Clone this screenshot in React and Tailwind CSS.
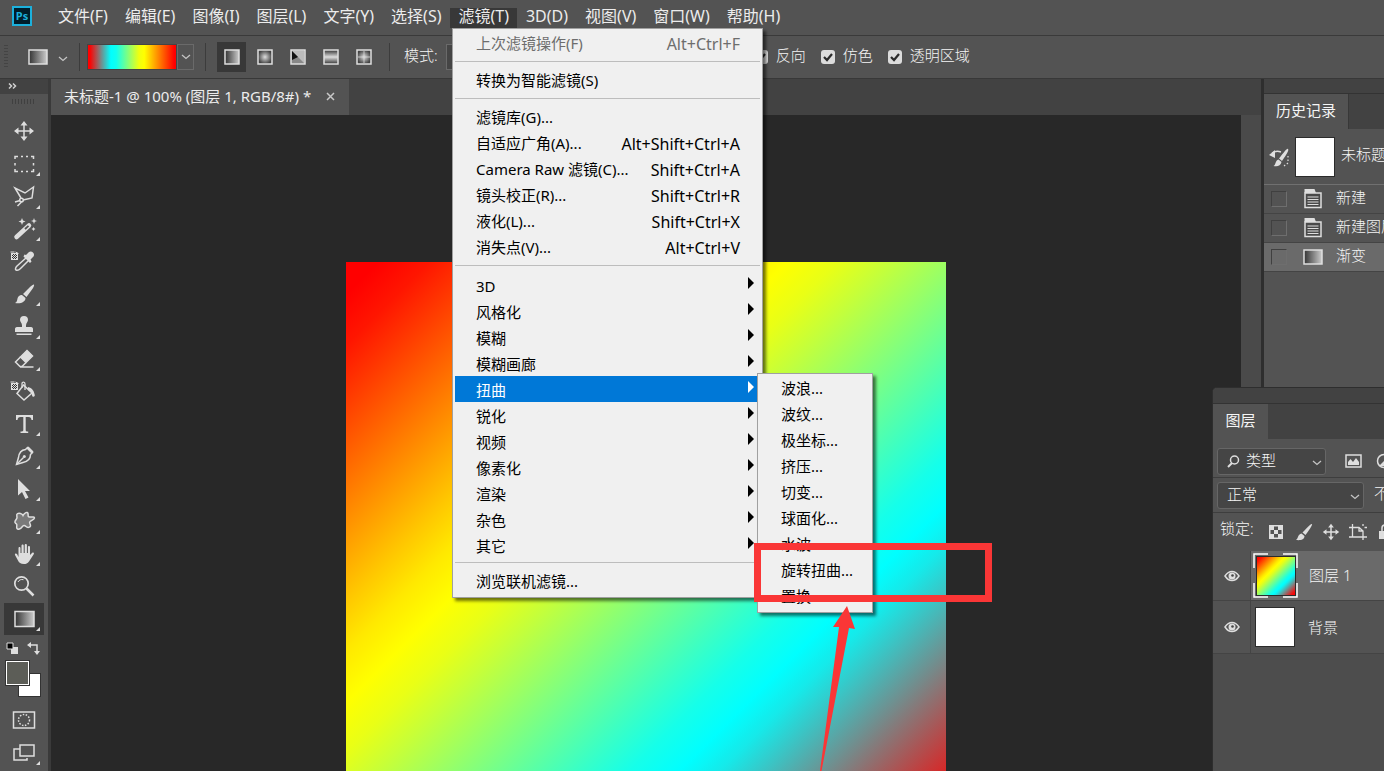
import React from "react";

const RAINBOW =
  "bg-[linear-gradient(135deg,#f00_2.7%,#ff1600_7%,#ff3800_11.2%,#ffc700_28.2%,#ffe900_32.5%,#ff0_36.7%,#e9ff16_40.9%,#c7ff38_45.1%,#38ffc7_61.8%,#16ffe9_66%,#0ff_70.2%,#16e9e9_73.6%,#38c7c7_77%,#c73838_90.8%,#e91616_94.2%,#f00_98%)]";

const MENUS = ["文件(F)", "编辑(E)", "图像(I)", "图层(L)", "文字(Y)", "选择(S)", "滤镜(T)", "3D(D)", "视图(V)", "窗口(W)", "帮助(H)"];

const FILTER_GROUPS = [
  [{ label: "上次滤镜操作(F)", keys: "Alt+Ctrl+F", disabled: true }],
  [{ label: "转换为智能滤镜(S)" }],
  [
    { label: "滤镜库(G)..." },
    { label: "自适应广角(A)...", keys: "Alt+Shift+Ctrl+A" },
    { label: "Camera Raw 滤镜(C)...", keys: "Shift+Ctrl+A" },
    { label: "镜头校正(R)...", keys: "Shift+Ctrl+R" },
    { label: "液化(L)...", keys: "Shift+Ctrl+X" },
    { label: "消失点(V)...", keys: "Alt+Ctrl+V" },
  ],
  [
    { label: "3D", sub: true },
    { label: "风格化", sub: true },
    { label: "模糊", sub: true },
    { label: "模糊画廊", sub: true },
    { label: "扭曲", sub: true, active: true },
    { label: "锐化", sub: true },
    { label: "视频", sub: true },
    { label: "像素化", sub: true },
    { label: "渲染", sub: true },
    { label: "杂色", sub: true },
    { label: "其它", sub: true },
  ],
  [{ label: "浏览联机滤镜..." }],
];

const DISTORT = ["波浪...", "波纹...", "极坐标...", "挤压...", "切变...", "球面化...", "水波...", "旋转扭曲...", "置换..."];

function Svg({ w = 24, h = 24, children, className = "" }) {
  return (
    <svg
      width={w}
      height={h}
      viewBox={`0 0 ${w} ${h}`}
      fill="none"
      stroke="#dedede"
      strokeWidth="1.5"
      className={`shrink-0 ${className}`}
      aria-hidden="true"
    >
      {children}
    </svg>
  );
}

function Chevron({ className = "" }) {
  return (
    <Svg w={10} h={6} className={className}>
      <path d="M1 1l4 3.5L9 1" stroke="#c4c4c4" strokeWidth="1.3" />
    </Svg>
  );
}

function MoveArt() {
  return (
    <>
      <path d="M12 4v16M4 12h16" />
      <path d="M12 2l3.500 4.500h-7zM12 22l3.500-4.500h-7zM2 12l4.500-3.500v7zM22 12l-4.500-3.500v7z" fill="#dedede" stroke="none" />
    </>
  );
}

function Checker() {
  return (
    <g>
      <path d="M-1 4h7v7h-7z" fill="#dedede" stroke="none" />
      <path d="M1 5h1v1H1zM3 5h1v1H3zM2 6h1v1H2zM4 6h1v1H4zM0 6h1v1H0zM1 7h1v1H1zM3 7h1v1H3zM2 8h1v1H2zM4 8h1v1H4zM0 8h1v1H0zM1 9h1v1H1zM3 9h1v1H3z" fill="#333" stroke="none" />
      <path d="M-1.500 3h4M3.500 3l3 1.500" strokeWidth="1" />
    </g>
  );
}

const TOOLS = [
  { name: "移动工具", art: <MoveArt /> },
  {
    name: "矩形选框工具", more: true,
    art: <path d="M3 7V4.500h3M9 4.500h2M14 4.500h2M19 4.500h2.500V7M21.500 11v2.500M21.500 17v2.500H19M16 19.500h-2M11 19.500H9M6 19.500H3V17M3 13.500V11" />,
  },
  {
    name: "套索工具", more: true,
    art: (
      <>
        <path d="M9 14L3 4l10 5 8.500-6L20 14l-9 2" />
        <circle cx="9.500" cy="16" r="1.800" />
        <path d="M8 16.500l-5 1.500M9.500 18l-4 4" />
      </>
    ),
  },
  {
    name: "快速选择工具", more: true,
    art: (
      <>
        <path d="M4.500 20L17 8.500" strokeWidth="4.500" strokeLinecap="round" />
        <path d="M13 12l3.500-3.200" stroke="#535353" strokeWidth="1.800" />
        <path d="M10 1l1 2.500L13.500 4.500 11 5.500 10 8 9 5.500 6.500 4.500 9 3.500zM22 1l.8 2.200L25 4l-2.200.8L22 7l-.8-2.200L19 4l2.200-.8zM21.500 10l.7 1.300 1.300.7-1.300.7-.7 1.300-.7-1.300-1.300-.7 1.300-.7z" fill="#dedede" stroke="none" />
      </>
    ),
  },
  {
    name: "吸管工具",
    art: (
      <>
        <Checker />
        <path d="M14.500 8.500l2.500 2.500-8.500 8.500c-1.500 1.500-3.500 2-4.500 1.500s-.5-2.500 1-4z" />
        <path d="M11.500 7.500l6.500 6.500 1.500-1.500-1-2 3-3c2-3-2-6.500-4.500-4.500l-3 3-1.500-.5z" fill="#dedede" stroke="none" />
      </>
    ),
  },
  {
    name: "画笔工具", more: true,
    art: (
      <path d="M22 2.500c.5.500-.5 3-2 5L14.500 15 11 12l7-7c2-1.800 3.500-3 4-2.500zM10 13l3.500 3c0 4-4.500 6-10.500 5 2-1 2-2 2.500-4.500S8.500 12.500 10 13z" fill="#dedede" stroke="none" />
    ),
  },
  {
    name: "仿制图章工具", more: true,
    art: (
      <path d="M12 2a4 4 0 014 4c0 1.500-2 3-2 5.500V13h5c1.500 0 2 1 2 2v3H3v-3c0-1 .5-2 2-2h5v-1.500C10 9 8 7.500 8 6a4 4 0 014-4zM4.500 19.500h15V21h-15z" fill="#dedede" stroke="none" />
    ),
  },
  {
    name: "橡皮擦工具", more: true,
    art: (
      <>
        <path d="M15 3.500l5.500 5.500-6.500 6.500L8.500 10z" fill="#dedede" />
        <path d="M8.500 10L3.500 15l4.500 4.500h2L14 15.500M8 20h13.500" />
      </>
    ),
  },
  {
    name: "油漆桶工具",
    art: (
      <>
        <Checker />
        <path d="M11.500 6L20 14l-8 7-7-6.500z" />
        <path d="M10 9V4.500C10 2.500 13 2.500 13 5v6" strokeWidth="1.300" />
        <path d="M16 8c4 1 6 4 6.500 7 1.500 3-2.500 4-2.500 1 0-2-1-3-4-5z" fill="#dedede" stroke="none" />
      </>
    ),
  },
  {
    name: "文字工具", more: true,
    art: <path d="M4 3h17v5h-1.500c-.2-2-1-3-3-3H13.700v13c0 1 .5 1.500 2.500 1.500V21H8.500v-1.500c2 0 2.800-.5 2.800-1.500V5H8.500c-2 0-2.800 1-3 3H4z" fill="#dedede" stroke="none" />,
  },
  {
    name: "钢笔工具", more: true,
    art: (
      <>
        <path d="M15.500 3.500l5 5-2 2c0 4-3 7-7.500 8l-6.500 2 2-7c.5-4.500 3-7.500 7-8z" />
        <path d="M4.500 20.500l7-7" />
        <circle cx="12.300" cy="12.500" r="1.500" fill="#dedede" stroke="none" />
        <path d="M14.500 4.500l5 5 2-2-5-5z" fill="#dedede" stroke="none" />
      </>
    ),
  },
  {
    name: "路径选择工具", more: true,
    art: <path d="M6 2l12 12h-5l3.500 6.500-3 1.500-3.500-7L6 18.500z" fill="#dedede" stroke="none" />,
  },
  {
    name: "自定形状工具", more: true,
    art: <path d="M11 6.500c1.500-3 4.500-4 5-2 .4 1.700-.5 3.500 1.500 3.500s5-.5 5 1-3 2.500-4.500 3.500 1 3 .5 4.500-3 2-4.500.5-2.500-1.500-4 .5-4 3-5 1.500.5-3.500-.5-4.500-2-1-1.500-2.500 2-2.500 2-4-1-3 .5-3.800 4.500-.2 5.500 1.800z" fill="#7a7a7a" />,
  },
  {
    name: "抓手工具", more: true,
    art: (
      <path d="M6.500 15V6c0-1.500 2-1.500 2 0v5h1V3.500c0-1.500 2.200-1.500 2.200 0V11h1V3c0-1.500 2.200-1.500 2.200 0v8h1V5c0-1.500 2.100-1.500 2.100 0v8l2-2c1.500-1 2.500 0 1.700 1.300L17 19.500c-1.500 2-3 2.500-5 2.500-3.500 0-5-1.500-6-3.500L3 13c-.5-1.500 1-2 2-1z" fill="#dedede" stroke="none" />
    ),
  },
  {
    name: "缩放工具",
    art: (
      <>
        <circle cx="9.500" cy="9.500" r="6.700" strokeWidth="1.700" />
        <path d="M6 8c1-2 3-3 5.500-2.300" strokeWidth="1" />
        <path d="M14.500 14.500l7 7" strokeWidth="2.500" />
      </>
    ),
  },
  {
    name: "渐变工具", more: true, active: true,
    art: <rect x="3" y="4.500" width="19" height="15" fill="url(#ramp)" />,
  },
];

function Ramp() {
  return (
    <svg width="0" height="0" className="absolute" aria-hidden="true">
      <defs>
        <linearGradient id="ramp">
          <stop offset="0" stopColor="#333" />
          <stop offset="1" stopColor="#ccc" />
        </linearGradient>
        <radialGradient id="radial">
          <stop offset="0" stopColor="#ddd" />
          <stop offset="1" stopColor="#444" />
        </radialGradient>
        <linearGradient id="mirror" x2="0" y2="1">
          <stop offset="0" stopColor="#333" />
          <stop offset=".5" stopColor="#ddd" />
          <stop offset="1" stopColor="#333" />
        </linearGradient>
      </defs>
    </svg>
  );
}

const STYLES = [
  { name: "线性渐变", art: <rect x="1" y="1" width="14" height="14" fill="url(#ramp)" /> },
  { name: "径向渐变", art: <rect x="1" y="1" width="14" height="14" fill="url(#radial)" /> },
  {
    name: "角度渐变",
    art: (
      <>
        <rect x="1" y="1" width="14" height="14" fill="#888" />
        <path d="M2 2l12 12V2z" fill="#bbb" stroke="none" />
        <path d="M2 2v9l6-3z" fill="#111" stroke="none" />
      </>
    ),
  },
  { name: "对称渐变", art: <rect x="1" y="1" width="14" height="14" fill="url(#mirror)" /> },
  {
    name: "菱形渐变",
    art: (
      <>
        <rect x="1" y="1" width="14" height="14" fill="url(#radial)" />
        <path d="M8 2v12M2 8h12" stroke="#ddd" strokeOpacity=".5" />
      </>
    ),
  },
];

function MenuBar() {
  return (
    <header className="flex h-9 shrink-0 items-center border-b border-[#3a3a3a] bg-[#535353] pl-3">
      <div className="mb-1 flex h-5 w-5 items-center justify-center border-2 border-[#1cb0dc] bg-[#001d2b] text-[11px] font-bold leading-none text-[#1cb0dc]">
        Ps
      </div>
      <nav className="ml-[18px] flex items-center gap-px">
        {MENUS.map((m) => (
          <button
            key={m}
            className={`flex h-5 items-center whitespace-nowrap px-2 pb-[3px] text-[16px] leading-4 ${m === "滤镜(T)" ? "bg-[#383838]" : ""}`}
          >
            {m}
          </button>
        ))}
      </nav>
    </header>
  );
}

function Option({ label }) {
  return (
    <label className="flex items-center gap-2 whitespace-nowrap">
      <span className="relative flex">
        <input type="checkbox" defaultChecked className="h-[14px] w-[14px] appearance-none rounded-[3px] bg-[#dcdcdc]" />
        <svg width="14" height="14" viewBox="0 0 14 14" className="pointer-events-none absolute inset-0" aria-hidden="true">
          <path d="M3 7l3 3 5-6" fill="none" stroke="#2b2b2b" strokeWidth="2.200" />
        </svg>
      </span>
      <span className="mb-1">{label}</span>
    </label>
  );
}

function OptionsBar() {
  return (
    <div className="flex h-[43px] shrink-0 items-center border-b border-[#383838] bg-[#535353] text-[15px] font-light text-[#f5f5f5]">
      <div className="ml-1 h-6 w-1 bg-[repeating-linear-gradient(#444_0_1px,transparent_1px_3px)]" />
      <button aria-label="工具预设" className="ml-5 flex items-center gap-[10px]">
        <Svg w={20} h={16}>
          <rect x="1" y="1" width="18" height="14" fill="url(#ramp)" />
        </Svg>
        <Chevron className="mt-1" />
      </button>
      <div className="ml-[11px] h-7 w-px bg-[#3c3c3c]" />
      <button aria-label="渐变" className="ml-[7px] h-[26px] w-[90px] border border-[#444] bg-[linear-gradient(90deg,#f00_2%,#0ff_26%,#10fff0_32%,#f0ff10_58%,#ff0_64%,#f00_98%)]" />
      <button aria-label="渐变拾色器" className="flex h-[26px] w-[17px] items-center justify-center border border-[#6a6a6a]">
        <Chevron />
      </button>
      <div className="ml-[11px] h-7 w-px bg-[#3c3c3c]" />
      <div className="ml-[11px] flex gap-1">
        {STYLES.map((s, i) => (
          <button key={s.name} aria-label={s.name} className={`flex h-[30px] w-[29px] items-center justify-center ${i === 0 ? "bg-[#383838]" : ""}`}>
            <Svg w={16} h={16}>{s.art}</Svg>
          </button>
        ))}
      </div>
      <div className="ml-[11px] h-7 w-px bg-[#3c3c3c]" />
      <label htmlFor="mode" className="mb-1 ml-[14px] whitespace-nowrap">模式:</label>
      <select id="mode" className="ml-2 h-[26px] w-[293px] shrink-0 appearance-none border border-[#6a6a6a] bg-[#454545] px-2 text-[15px]">
        <option>正常</option>
      </select>
      <div className="ml-[15px] flex gap-[15px]">
        <Option label="反向" />
        <Option label="仿色" />
        <Option label="透明区域" />
      </div>
    </div>
  );
}

function Toolbar() {
  return (
    <aside className="w-[51px] shrink-0 border-r-[3px] border-[#3a3a3a] bg-[#535353]">
      <div className="h-[15px] bg-[#424242] pl-2 pt-1">
        <Svg w={9} h={7}>
          <path d="M1 .500l2.500 2.500L1 5.500M5 .500l2.500 2.500L5 5.500" stroke="#d0d0d0" />
        </Svg>
      </div>
      <div className="ml-3 mt-[5px] h-[5px] w-6 bg-[repeating-linear-gradient(90deg,#404040_0_1px,transparent_1px_3px)]" />
      <div className="mt-[11px] grid h-[520px] auto-rows-fr px-1">
        {TOOLS.map((t) => (
          <button
            key={t.name}
            aria-label={t.name}
            className={`relative flex items-center justify-center ${t.active ? "bg-[#383838]" : ""}`}
          >
            <Svg className="overflow-visible">{t.art}</Svg>
            {t.more && (
              <svg width="4" height="4" className="absolute bottom-1 right-1" aria-hidden="true">
                <path d="M4 0v4H0z" fill="#dedede" />
              </svg>
            )}
          </button>
        ))}
      </div>
      <div className="mt-[7px] flex justify-between pl-[6px] pr-2">
        <Svg w={13} h={13}>
          <path d="M5 5h7v7H5z" fill="#dedede" stroke="none" />
          <path d="M1 1h6v6H1z" fill="#000" strokeWidth="1" />
        </Svg>
        <Svg w={13} h={13}>
          <path d="M3 3h7v7" />
          <path d="M0 3l4-3v6zM10 13L7 9h6z" fill="#dedede" stroke="none" />
        </Svg>
      </div>
      <div className="ml-[6px] mt-[6px] grid h-9 w-[35px] grid-cols-3 grid-rows-3">
        <button aria-label="背景色" className="col-span-2 col-start-2 row-span-2 row-start-2 border border-[#333] bg-white" />
        <button aria-label="前景色" className="col-span-2 col-start-1 row-span-2 row-start-1 border border-white bg-[#5c5d57] outline outline-[#333]" />
      </div>
      <div className="mt-[11px] flex flex-col items-center gap-[9px]">
        <button aria-label="快速蒙版">
          <Svg>
            <rect x="1.500" y="4" width="21" height="16" />
            <circle cx="12" cy="12" r="5.500" strokeDasharray="1.500 1.500" />
          </Svg>
        </button>
        <button aria-label="屏幕模式" className="relative">
          <Svg>
            <path d="M8 8H2v11h13v-2" />
            <rect x="8" y="4" width="14" height="11" />
          </Svg>
          <svg width="4" height="4" className="absolute -right-1 bottom-0" aria-hidden="true">
            <path d="M4 0v4H0z" fill="#dedede" />
          </svg>
        </button>
      </div>
    </aside>
  );
}

function Workspace() {
  return (
    <main className="flex min-w-0 flex-1 flex-col">
      <div className="flex h-9 shrink-0 bg-[#424242]">
        <div className="flex items-center gap-[15px] whitespace-nowrap bg-[#535353] pb-px pl-[13px] pr-[14px] text-[15px]">
          <span>未标题-1 @ 100% (图层 1, RGB/8#) *</span>
          <button aria-label="关闭">
            <Svg w={9} h={9}>
              <path d="M1 1l7 7M8 1L1 8" stroke="#c8c8c8" />
            </Svg>
          </button>
        </div>
      </div>
      <div className="flex min-h-0 flex-1">
        <div className="flex min-w-0 flex-1 justify-center overflow-hidden bg-[#282828] pt-[147px]">
          <div className={`h-[600px] w-[600px] shrink-0 ${RAINBOW}`} />
        </div>
        <div className="w-5 shrink-0 bg-[#4a4a4a]" />
      </div>
    </main>
  );
}

function PageIcon() {
  return (
    <Svg w={20} h={20}>
      <path d="M2 4h16v14.500H2z" fill="#4a4a4a" />
      <path d="M4.500 8h11M4.500 10.500h11M4.500 13h11M4.500 15.500h11" strokeWidth="1.200" />
      <path d="M1.500 0h10l1.500 4H1.500z" fill="#dedede" stroke="none" />
    </Svg>
  );
}

function HistoryRow({ label, icon, active }) {
  return (
    <li className={`flex h-[29px] items-center whitespace-nowrap border-b border-[#444] pl-[7px] ${active ? "bg-[#6a6a6a]" : ""}`}>
      <label className="flex shrink-0">
        <input
          type="checkbox"
          aria-label={label}
          className="h-4 w-4 appearance-none border border-b-[#6e6e6e] border-l-[#404040] border-r-[#6e6e6e] border-t-[#404040]"
        />
      </label>
      <span className="ml-[15px] flex w-[22px] shrink-0 justify-center">{icon}</span>
      <span className="mb-1 ml-3">{label}</span>
    </li>
  );
}

function HistoryPanel() {
  return (
    <aside className="w-[123px] shrink-0 overflow-hidden border-l-[3px] border-[#2e2e2e] bg-[#535353] text-[15px] font-light text-[#f5f5f5]">
      <div className="h-[15px] border-b border-[#333] bg-[#424242]" />
      <div className="flex h-[35px] bg-[#424242]">
        <h2 className="flex w-[85px] items-center justify-center border-r border-[#383838] bg-[#535353] pb-[2px] font-normal">历史记录</h2>
      </div>
      <div className="flex h-14 items-center whitespace-nowrap border-b border-[#707070] pl-1">
        <Svg w={22} h={22}>
          <path d="M20 3c1 1-.5 4-6 12l-3-2.500c5-6 8-10.500 9-9.500zM10.500 13.500l3 2.500c-1 4-4 5-8 4 2.500-1 1.500-5.500 5-6.500z" fill="#dedede" stroke="none" />
          <path d="M4 7c3-2 6-2 9-1" />
          <path d="M1 9l6-5v8z" fill="#dedede" stroke="none" />
          <path d="M20 10v7l-4 3" strokeDasharray="1.500 2" strokeWidth="1.200" />
        </Svg>
        <div className="ml-[5px] h-10 w-10 shrink-0 border border-[#2b2b2b] bg-white" />
        <span className="mb-1 ml-[6px]">未标题-1</span>
      </div>
      <ul>
        <HistoryRow label="新建" icon={<PageIcon />} />
        <HistoryRow label="新建图层" icon={<PageIcon />} />
        <HistoryRow
          active
          label="渐变"
          icon={
            <Svg w={20} h={16}>
              <rect x="1" y="1" width="18" height="14" fill="url(#ramp)" />
            </Svg>
          }
        />
      </ul>
    </aside>
  );
}

function Dropdown({ id, label, value, className, children, pad }) {
  return (
    <div className={`relative flex shrink-0 items-center ${className}`}>
      {children}
      <select
        id={id}
        aria-label={label}
        className={`h-[27px] w-full appearance-none rounded-[3px] border border-[#666] bg-[#454545] pb-[2px] text-[15px] ${pad}`}
      >
        <option>{value}</option>
      </select>
      <Chevron className="pointer-events-none absolute right-1 top-3" />
    </div>
  );
}

function Eye() {
  return (
    <Svg w={16} h={12}>
      <path d="M1 6c4-6 10-6 14 0-4 6-10 6-14 0z" />
      <circle cx="8" cy="6" r="3.500" fill="#dedede" stroke="none" />
      <circle cx="8.500" cy="5.500" r="1.300" fill="#444" stroke="none" />
    </Svg>
  );
}

function LayersPanel() {
  return (
    <aside className="absolute bottom-0 right-0 top-[387px] w-[172px] overflow-hidden rounded-tl-[5px] border-l border-t border-[#2e2e2e] bg-[#4d4d4d] text-[15px] font-light text-[#f5f5f5]">
      <div className="h-4 border-b border-[#333] bg-[#424242]" />
      <div className="flex h-[35px] bg-[#424242]">
        <h2 className="flex w-[55px] items-center justify-center bg-[#535353] pb-[2px] font-normal">图层</h2>
      </div>
      <div className="flex h-[39px] items-center border-b border-[#3e3e3e] bg-[#535353] pl-1 pt-[6px]">
        <Dropdown id="kind" label="过滤类型" value="类型" className="w-[109px]" pad="pl-7">
          <Svg w={13} h={13} className="pointer-events-none absolute left-[10px]">
            <circle cx="7.500" cy="5" r="4" />
            <path d="M5 8l-4 4" strokeWidth="2" />
          </Svg>
        </Dropdown>
        <button aria-label="像素图层过滤" className="ml-[19px]">
          <Svg w={17} h={14}>
            <rect x="1" y="1" width="15" height="12" />
            <path d="M3 11V8l2.500-3L8 8l3-4 3 4v3z" fill="#dedede" stroke="none" />
          </Svg>
        </button>
        <button aria-label="调整图层过滤" className="ml-[14px]">
          <Svg w={16} h={16}>
            <circle cx="8" cy="8" r="6.500" />
            <path d="M3 13L13 3a7 7 0 010 10z" fill="#dedede" stroke="none" />
          </Svg>
        </button>
      </div>
      <div className="flex h-[35px] items-center whitespace-nowrap border-b border-[#3e3e3e] bg-[#535353] pl-1">
        <Dropdown id="blend" label="混合模式" value="正常" className="w-[147px]" pad="pl-[9px]" />
        <span className="mb-1 ml-[10px]">不透明度</span>
      </div>
      <div className="flex h-[38px] items-center whitespace-nowrap bg-[#535353] pl-[7px]">
        <span className="mb-2">锁定:</span>
        <button aria-label="锁定透明像素" className="ml-[15px]">
          <Svg w={14} h={14}>
            <rect x=".750" y=".750" width="12.500" height="12.500" />
            <path d="M1 1h4v4H1zM9 1h4v4H9zM5 5h4v4H5zM1 9h4v4H1zM9 9h4v4H9z" fill="#dedede" stroke="none" />
          </Svg>
        </button>
        <button aria-label="锁定图像像素" className="ml-3">
          <Svg w={18} h={18}>
            <path d="M17 1c.5.800-1 3.500-6.500 11L7.500 9.500C13 3.500 16.500.200 17 1zM6.500 10.500L9.500 13c0 4-4.500 4.500-8.500 4 2.500-1.500 1.500-5.500 5.500-6.500z" fill="#dedede" stroke="none" />
          </Svg>
        </button>
        <button aria-label="锁定位置" className="ml-[9px]">
          <svg width="18" height="18" viewBox="1 1 22 22" fill="none" stroke="#dedede" strokeWidth="1.800" aria-hidden="true">
            <MoveArt />
          </svg>
        </button>
        <button aria-label="锁定画板" className="ml-[9px]">
          <Svg w={18} h={16}>
            <path d="M3.500 0v13M0 3.500h10l4 3.500v9M0 13h18M10 3.500V7h4M14 0v2M15.500 3.500H18" strokeWidth="1.300" />
          </Svg>
        </button>
        <button aria-label="锁定全部" className="ml-3">
          <Svg w={12} h={16}>
            <rect x="0" y="7" width="12" height="8" fill="#dedede" stroke="none" />
            <path d="M3 8V4c0-4 6-4 6 0v4" />
          </Svg>
        </button>
      </div>
      <ul>
        <li className="flex h-[50px] items-center whitespace-nowrap border-b border-[#444] bg-[#535353]">
          <button aria-label="切换可见性" className="flex h-full w-[38px] items-center justify-center border-r border-[#444]">
            <Eye />
          </button>
          <div className="flex h-full flex-1 items-center bg-[#6a6a6a] pl-[2px]">
            <div className="relative flex h-[45px] w-[45px] items-center justify-center">
              <div className={`h-10 w-10 border border-[#2b2b2b] ${RAINBOW}`} />
              <svg width="45" height="45" className="absolute inset-0" fill="none" stroke="#fff" strokeWidth="1.500" aria-hidden="true">
                <path d="M1 15V1h14M30 1h14v14M44 30v14H30M15 44H1V30" />
              </svg>
            </div>
            <span className="ml-[11px]">图层 1</span>
          </div>
        </li>
        <li className="flex h-[53px] items-center whitespace-nowrap border-b border-[#444] bg-[#535353]">
          <button aria-label="切换可见性" className="flex h-full w-[38px] items-center justify-center border-r border-[#444]">
            <Eye />
          </button>
          <div className="ml-1 h-10 w-10 border border-[#2b2b2b] bg-white" />
          <span className="ml-[13px]">背景</span>
        </li>
      </ul>
    </aside>
  );
}

function FilterMenu() {
  return (
    <div
      role="menu"
      className="absolute left-[452px] top-7 w-[311px] border border-[#a0a0a0] bg-[#f0f0f0] p-[2px] text-[15px] text-black shadow-[3px_3px_3px_rgba(0,0,0,0.55)]"
    >
      {FILTER_GROUPS.map((group, g) => (
        <React.Fragment key={g}>
          {g > 0 && <div className="mb-[6px] mt-1 h-px bg-[#bdbdbd]" />}
          {group.map((item) => (
            <button
              key={item.label}
              role="menuitem"
              disabled={item.disabled}
              className={`flex h-[26px] w-full items-center justify-between whitespace-nowrap pl-[21px] text-left ${
                item.active ? "bg-[#0078d7] text-white" : item.disabled ? "text-[#6d6d6d]" : ""
              } ${item.sub ? "pr-[6px] pt-[2px]" : "pb-px pr-5"}`}
            >
              <span>{item.label}</span>
              {item.keys && <span className="text-[16px]">{item.keys}</span>}
              {item.sub && (
                <svg width="6" height="12" className="mb-[6px]" aria-hidden="true">
                  <path d="M0 0l6 6-6 6z" fill="currentColor" />
                </svg>
              )}
            </button>
          ))}
        </React.Fragment>
      ))}
    </div>
  );
}

function DistortMenu() {
  return (
    <div
      role="menu"
      className="absolute left-[757px] top-[373px] w-[116px] border border-[#a0a0a0] bg-[#f0f0f0] pb-[3px] pt-px text-[15px] text-black shadow-[3px_3px_3px_rgba(0,0,0,0.55)]"
    >
      {DISTORT.map((d) => (
        <button key={d} role="menuitem" className="flex h-[26px] w-full items-center whitespace-nowrap pl-[23px]">
          {d}
        </button>
      ))}
    </div>
  );
}

function Annotation() {
  return (
    <>
      <div className="pointer-events-none absolute left-[754px] top-[543px] h-[59px] w-[238px] border-[7px] border-[#fa3636]" />
      <svg width="40" height="165" className="pointer-events-none absolute left-[818px] top-[606px]" aria-hidden="true">
        <path d="M29 0l8 23-6-1L3.500 165H2L21 21l-6 0z" fill="#fa3636" />
      </svg>
    </>
  );
}

export default function App() {
  return (
    <div className="relative flex h-screen flex-col overflow-hidden bg-[#535353] font-['Noto_Sans','Noto_Sans_CJK_SC',sans-serif] text-[#ececec]">
      <Ramp />
      <MenuBar />
      <OptionsBar />
      <div className="flex min-h-0 flex-1">
        <Toolbar />
        <Workspace />
        <HistoryPanel />
      </div>
      <LayersPanel />
      <FilterMenu />
      <DistortMenu />
      <Annotation />
    </div>
  );
}
